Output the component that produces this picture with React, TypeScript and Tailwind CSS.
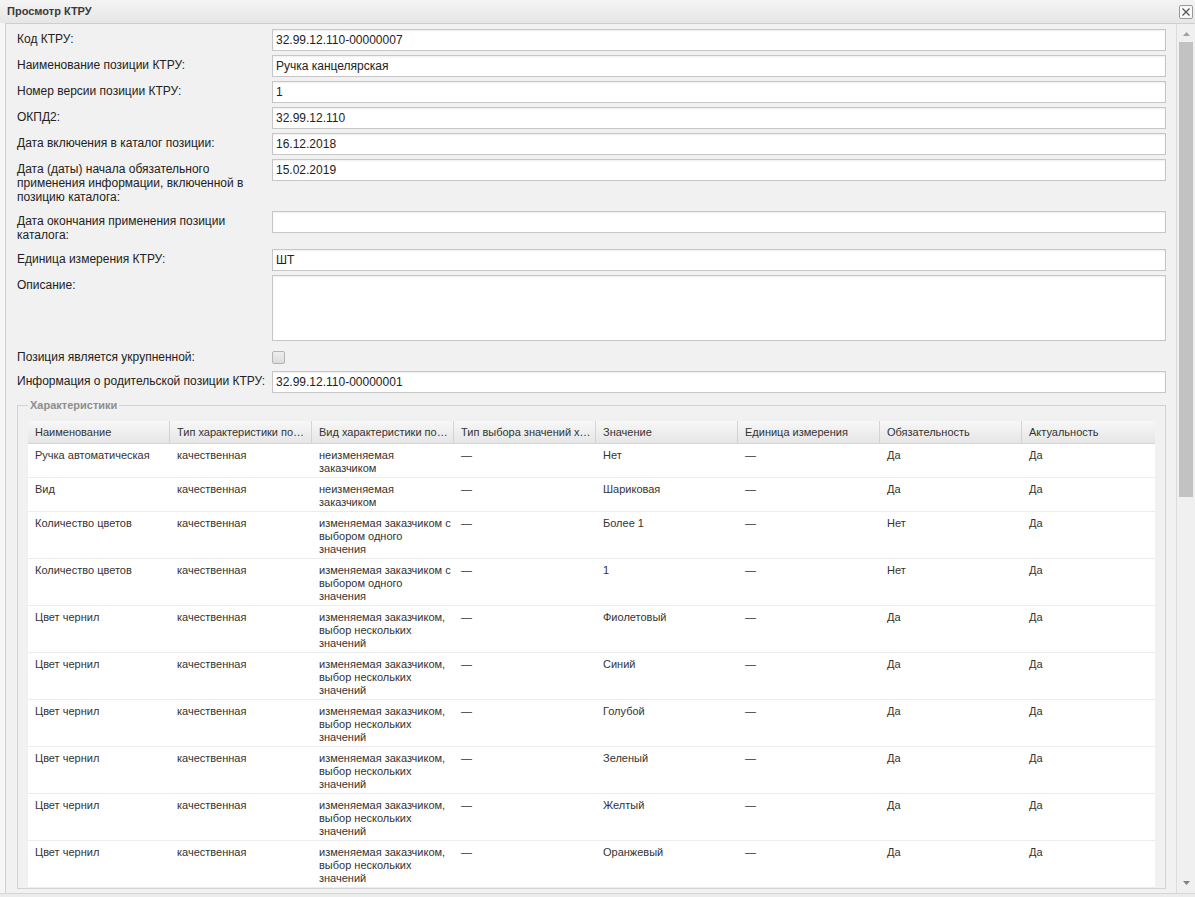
import React from 'react';

const font = { fontFamily: '"Liberation Sans", Arial, sans-serif' };

type Row = [string, string, string, string, string, string, string, string];

const fixedChoice = 'неизменяемая\nзаказчиком';
const oneChoice = 'изменяемая заказчиком с\nвыбором одного\nзначения';
const manyChoice = 'изменяемая заказчиком,\nвыбор нескольких\nзначений';

const rows: Row[] = [
  ['Ручка автоматическая', 'качественная', fixedChoice, '—', 'Нет', '—', 'Да', 'Да'],
  ['Вид', 'качественная', fixedChoice, '—', 'Шариковая', '—', 'Да', 'Да'],
  ['Количество цветов', 'качественная', oneChoice, '—', 'Более 1', '—', 'Нет', 'Да'],
  ['Количество цветов', 'качественная', oneChoice, '—', '1', '—', 'Нет', 'Да'],
  ['Цвет чернил', 'качественная', manyChoice, '—', 'Фиолетовый', '—', 'Да', 'Да'],
  ['Цвет чернил', 'качественная', manyChoice, '—', 'Синий', '—', 'Да', 'Да'],
  ['Цвет чернил', 'качественная', manyChoice, '—', 'Голубой', '—', 'Да', 'Да'],
  ['Цвет чернил', 'качественная', manyChoice, '—', 'Зеленый', '—', 'Да', 'Да'],
  ['Цвет чернил', 'качественная', manyChoice, '—', 'Желтый', '—', 'Да', 'Да'],
  ['Цвет чернил', 'качественная', manyChoice, '—', 'Оранжевый', '—', 'Да', 'Да'],
];

const columns = [
  'Наименование',
  'Тип характеристики по…',
  'Вид характеристики по…',
  'Тип выбора значений х…',
  'Значение',
  'Единица измерения',
  'Обязательность',
  'Актуальность',
];

const Field = ({
  label,
  children,
  labelClass = 'pt-[3px] pb-[3px]',
}: {
  label: string;
  children: React.ReactNode;
  labelClass?: string;
}) => (
  <div className="flex">
    <div className={`w-[255px] shrink-0 pr-[6px] text-[12px] leading-[14px] text-[#222] ${labelClass}`}>{label}</div>
    <div className="flex-1">{children}</div>
  </div>
);

const TextInput = ({ value = '' }: { value?: string }) => (
  <input
    readOnly
    value={value}
    className="block h-[22px] w-full border border-[#c6c6c6] bg-white px-[3px] text-[12px] text-[#222] shadow-[inset_0_1px_2px_rgba(0,0,0,0.07)] outline-none"
    style={font}
  />
);

const App = () => {
  return (
    <div className="flex h-[897px] w-[1195px] flex-col overflow-hidden bg-[#f6f6f6] text-[#333]" style={font}>
      {/* Title bar */}
      <div className="relative flex h-[23px] shrink-0 items-center bg-gradient-to-b from-[#f4f4f4] to-[#e6e6e6] pl-[7px]">
        <span className="text-[11px] font-bold text-[#3a3a3a]">Просмотр КТРУ</span>
        <button className="absolute right-[2px] top-[5px] flex h-[14px] w-[14px] items-center justify-center rounded-[2px] border border-[#9a9a9a] bg-[#f8f8f8]">
          <svg width="10" height="10" viewBox="0 0 10 10">
            <path d="M1.5 1.5 L8.5 8.5 M8.5 1.5 L1.5 8.5" stroke="#555" strokeWidth="1.3" />
          </svg>
        </button>
      </div>

      {/* Body */}
      <div className="ml-[5px] flex min-h-0 flex-1 border-l border-t border-[#cfcfcf] bg-[#f1f1f1]">
        <div className="min-w-0 flex-1 overflow-hidden pl-[11px] pr-[10px] pt-[5px]">
          <div className="flex flex-col gap-[4px]">
            <Field label="Код КТРУ:">
              <TextInput value="32.99.12.110-00000007" />
            </Field>
            <Field label="Наименование позиции КТРУ:">
              <TextInput value="Ручка канцелярская" />
            </Field>
            <Field label="Номер версии позиции КТРУ:">
              <TextInput value="1" />
            </Field>
            <Field label="ОКПД2:">
              <TextInput value="32.99.12.110" />
            </Field>
            <Field label="Дата включения в каталог позиции:">
              <TextInput value="16.12.2018" />
            </Field>
            <Field label="Дата (даты) начала обязательного применения информации, включенной в позицию каталога:">
              <TextInput value="15.02.2019" />
            </Field>
            <Field label="Дата окончания применения позиции каталога:">
              <TextInput />
            </Field>
            <Field label="Единица измерения КТРУ:">
              <TextInput value="ШТ" />
            </Field>
            <Field label="Описание:">
              <textarea
                readOnly
                className="block h-[66px] w-full resize-none border border-[#c6c6c6] bg-white shadow-[inset_0_1px_2px_rgba(0,0,0,0.07)] outline-none"
              />
            </Field>
            <Field label="Позиция является укрупненной:" labelClass="pt-[5px] pb-[1px]">
              <div className="flex h-[22px] items-center pt-[3px]">
                <span className="h-[13px] w-[13px] rounded-[2px] border border-[#b4b4b4] bg-gradient-to-b from-[#eeeeee] to-[#dcdcdc]" />
              </div>
            </Field>
            <Field label="Информация о родительской позиции КТРУ:">
              <TextInput value="32.99.12.110-00000001" />
            </Field>

            {/* Characteristics */}
            <fieldset className="mt-[2px] border border-[#d3d3d3] px-[10px] pt-[9px]">
              <legend className="px-[2px] text-[11px] font-bold leading-[13px] text-[#8e8e8e]">Характеристики</legend>
              <div className="bg-white">
                <div className="flex h-[23px] border-b border-[#d6d6d6] bg-gradient-to-b from-[#f7f7f7] to-[#e6e6e6]">
                  {columns.map((c, i) => (
                    <div
                      key={i}
                      className={`${i === columns.length - 1 ? 'flex-1' : 'w-[142px] border-r border-[#d4d4d4]'} overflow-hidden whitespace-nowrap pl-[7px] pr-[1px] text-[11px] leading-[22px] text-[#333]`}
                    >
                      {c}
                    </div>
                  ))}
                </div>
                {rows.map((r, ri) => (
                  <div key={ri} className="flex border-b border-[#ececec]">
                    {r.map((cell, ci) => (
                      <div
                        key={ci}
                        className={`${ci === r.length - 1 ? 'flex-1' : 'w-[142px]'} whitespace-pre pb-[2px] pl-[7px] pt-[5px] text-[11px] leading-[13px] text-[#333]`}
                      >
                        {cell}
                      </div>
                    ))}
                  </div>
                ))}
              </div>
            </fieldset>
          </div>
        </div>

        {/* Scrollbar */}
        <div className="flex w-[19px] shrink-0 flex-col items-center border-l border-[#dcdcdc] bg-[#f0f0f0] py-[4px]">
          <svg width="9" height="6" viewBox="0 0 9 6" className="mt-[3px]">
            <path d="M4.5 1 L8 5 L1 5 Z" fill="#a0a0a0" />
          </svg>
          <div className="mt-[5px] h-[455px] w-[14px] bg-[#c2c2c2]" />
          <div className="flex-1" />
          <svg width="9" height="6" viewBox="0 0 9 6" className="mb-[3px]">
            <path d="M1 1 L8 1 L4.5 5 Z" fill="#808080" />
          </svg>
        </div>
      </div>

      {/* Bottom frame */}
      <div className="h-[4px] shrink-0 border-t border-[#d6d6d6] bg-[#ececec]" />
    </div>
  );
};

export default App;
